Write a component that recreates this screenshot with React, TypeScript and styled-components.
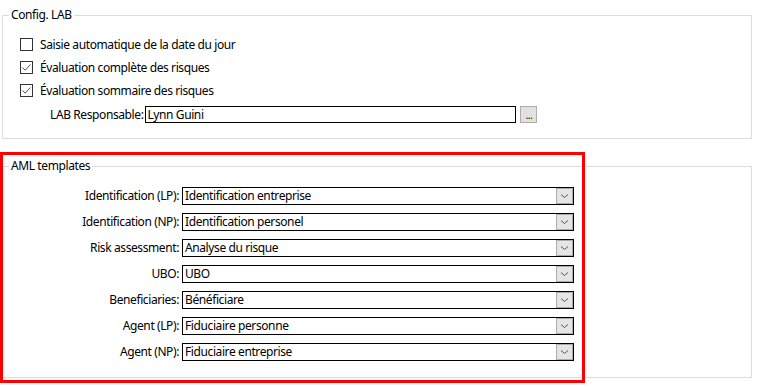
import React from "react";
import styled, { createGlobalStyle } from "styled-components";

const Global = createGlobalStyle`
  html, body { margin: 0; padding: 0; background: #fff; }
  body { font-family: "Noto Sans", "Liberation Sans", sans-serif; font-size: 12px; letter-spacing: -0.4px; color: #000; }
  * { box-sizing: border-box; }
`;

const Page = styled.div`
  position: relative;
  width: 758px;
  height: 387px;
  padding: 7px 0 0 2px;
  display: flex;
  flex-direction: column;
  gap: 19px;
`;

const Group = styled.fieldset<{ $h: number }>`
  margin: 0;
  width: 750px;
  height: ${(p) => p.$h}px;
  border: 1px solid #dcdcdc;
  padding: 0;
  min-width: 0;
`;

const Legend = styled.legend`
  margin-left: 6px;
  padding: 0 2px;
  line-height: 16px;
  font-size: 12px;
`;

const CheckList = styled.div`
  display: flex;
  flex-direction: column;
  padding: 10px 0 0 17px;
`;

const CheckRow = styled.label`
  display: flex;
  align-items: center;
  height: 23px;
  gap: 7px;
`;

const Box = styled.span`
  width: 13px;
  height: 13px;
  border: 1px solid #333;
  background: #fff;
  display: flex;
  align-items: center;
  justify-content: center;
`;

const ResponsableRow = styled.div`
  display: flex;
  align-items: center;
  height: 17px;
  margin-top: 4px;
  padding-left: 30px;
`;

const Label = styled.span`
  white-space: nowrap;
`;

const TextInput = styled.div`
  width: 371px;
  height: 17px;
  border: 1px solid #000;
  margin-left: 2px;
  padding-left: 1px;
  line-height: 15px;
  background: #fff;
`;

const DotsButton = styled.div`
  width: 17px;
  height: 17px;
  margin-left: 4px;
  background: #e1e1e1;
  border: 1px solid #adadad;
  font-size: 10px;
  line-height: 17px;
  text-align: center;
  letter-spacing: -0.5px;
`;

const Grid = styled.div`
  display: grid;
  grid-template-columns: 176px 392px;
  column-gap: 3px;
  row-gap: 8px;
  padding-top: 13px;
`;

const FieldLabel = styled.div`
  text-align: right;
  line-height: 18px;
  height: 18px;
  white-space: nowrap;
`;

const Combo = styled.div`
  height: 18px;
  border: 1px solid #000;
  display: flex;
  align-items: stretch;
  background: #fff;
`;

const ComboText = styled.span`
  flex: 1;
  padding-left: 2px;
  line-height: 16px;
  white-space: nowrap;
`;

const ComboButton = styled.span`
  width: 17px;
  background: #e5e5e5;
  border: 1px solid #acacac;
  display: flex;
  align-items: center;
  justify-content: center;
`;

const Highlight = styled.div`
  position: absolute;
  left: 0;
  top: 152px;
  width: 585px;
  height: 231px;
  border: 3px solid #ff0000;
  pointer-events: none;
`;

const Check = () => (
  <svg width="11" height="11" viewBox="0 0 11 11">
    <path d="M1.5 5.5 L4.2 8.2 L9.5 2.5" fill="none" stroke="#555" strokeWidth="1" />
  </svg>
);

const Chevron = () => (
  <svg width="9" height="6" viewBox="0 0 9 6">
    <path d="M1 1.5 L4.5 4.5 L8 1.5" fill="none" stroke="#555" strokeWidth="1" />
  </svg>
);

const checks = [
  { text: "Saisie automatique de la date du jour", on: false },
  { text: "Évaluation complète des risques", on: true },
  { text: "Évaluation sommaire des risques", on: true },
];

const templates = [
  ["Identification (LP):", "Identification entreprise"],
  ["Identification (NP):", "Identification personel"],
  ["Risk assessment:", "Analyse du risque"],
  ["UBO:", "UBO"],
  ["Beneficiaries:", "Bénéficiare"],
  ["Agent (LP):", "Fiduciaire personne"],
  ["Agent (NP):", "Fiduciaire entreprise"],
];

export default function App() {
  return (
    <>
      <Global />
      <Page>
        <Group $h={132}>
          <Legend>Config. LAB</Legend>
          <CheckList>
            {checks.map((c) => (
              <CheckRow key={c.text}>
                <Box>{c.on && <Check />}</Box>
                <span>{c.text}</span>
              </CheckRow>
            ))}
            <ResponsableRow>
              <Label>LAB Responsable:</Label>
              <TextInput>Lynn Guini</TextInput>
              <DotsButton>...</DotsButton>
            </ResponsableRow>
          </CheckList>
        </Group>
        <Group $h={220}>
          <Legend>AML templates</Legend>
          <Grid>
            {templates.map(([l, v]) => (
              <React.Fragment key={l}>
                <FieldLabel>{l}</FieldLabel>
                <Combo>
                  <ComboText>{v}</ComboText>
                  <ComboButton>
                    <Chevron />
                  </ComboButton>
                </Combo>
              </React.Fragment>
            ))}
          </Grid>
        </Group>
        <Highlight />
      </Page>
    </>
  );
}
